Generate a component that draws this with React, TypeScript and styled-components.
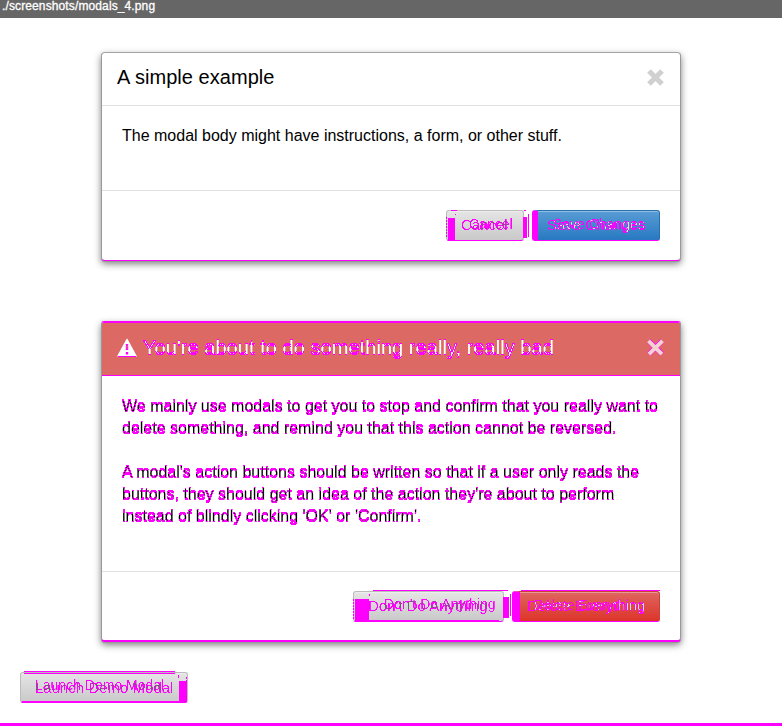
import React from "react";
import styled, { createGlobalStyle, css } from "styled-components";

const MARK = "#ff00ff";

const GlobalStyle = createGlobalStyle`
  * { box-sizing: border-box; }
  html, body { margin: 0; overflow: hidden; background: #fff; }
  body { font-family: "Liberation Sans", Arial, sans-serif; color: #000; }
`;

const Page = styled.div`
  width: 782px;
  height: 726px;
  display: flex;
  flex-direction: column;
  align-items: flex-start;
  border-bottom: 3px solid ${MARK};
`;

const TitleBar = styled.header`
  width: 100%;
  height: 18px;
  flex: none;
  padding-left: 2px;
  background: #666;
  color: #fff;
  font-size: 12px;
  line-height: 13px;
  letter-spacing: 0.12px;
  -webkit-text-stroke: 0.3px #fff;
`;

const Modal = styled.section<{ $danger?: boolean }>`
  width: 580px;
  height: ${(p) => (p.$danger ? 321 : 209)}px;
  flex: none;
  margin: ${(p) => (p.$danger ? "60px 0 0 101px" : "34px 0 0 101px")};
  display: flex;
  flex-direction: column;
  background: #fff;
  border: 1px solid #999;
  border-bottom: ${(p) => (p.$danger ? 2 : 1)}px solid ${MARK};
  border-top-color: ${(p) => (p.$danger ? MARK : "#a4a4a4")};
  border-radius: ${(p) => (p.$danger ? "3px 3px 4px 4px" : "4px")};
  box-shadow: 0 1px 0 #999, 0 3px 7px rgba(0, 0, 0, 0.5);
`;

const ModalHeader = styled.div<{ $danger?: boolean }>`
  height: ${(p) => (p.$danger ? 54 : 53)}px;
  flex: none;
  display: flex;
  align-items: center;
  padding: 0 15px;
  border-bottom: 1px solid ${(p) => (p.$danger ? MARK : "#e1e1e1")};
  ${(p) =>
    p.$danger &&
    css`
      background: #dd6964;
      color: #fff;
      border-top: 1px solid ${MARK};
      border-radius: 2px 2px 0 0;
    `}
`;

const Title = styled.h2<{ $marked?: boolean }>`
  margin: 0 0 ${(p) => (p.$marked ? 2 : 4)}px;
  flex: 1;
  font-size: 20px;
  line-height: 24px;
  font-weight: 400;
  letter-spacing: 0.05px;
  white-space: nowrap;
  ${(p) => p.$marked && "filter: url(#shifted-text);"}
`;

const WarningIcon = styled.svg`
  width: 20px;
  height: 20px;
  flex: none;
  margin-right: 6px;
  margin-top: -3px;
`;

const CloseIcon = styled.svg`
  width: 19px;
  height: 19px;
  flex: none;
  margin-top: -3px;
`;

const Body = styled.div<{ $marked?: boolean }>`
  flex: 1;
  padding: ${(p) => (p.$marked ? 20 : 19)}px 20px 0;
  font-size: 16px;
  line-height: 22px;
  white-space: nowrap;
  ${(p) => p.$marked && "filter: url(#shifted-text);"}
`;

const Paragraph = styled.p`
  margin: 0 0 22px;
`;

const Footer = styled.div<{ $danger?: boolean }>`
  height: ${(p) => (p.$danger ? 69 : 70)}px;
  flex: none;
  display: flex;
  justify-content: flex-end;
  padding: 19px 20px 0 0;
  border-top: 1px solid #e1e1e1;
`;

type Tone = "grey" | "blue" | "red";
const tones = {
  grey: ["#e5e5e5", "#c9c9c9", "#bbb"],
  blue: ["#589cd4", "#2879c2", "#2472b0"],
  red: ["#df6660", "#dd3429", "#c94139"],
};

const ButtonFace = styled.button<{ $tone: Tone; $width: number; $strip: number }>`
  position: relative;
  width: ${(p) => p.$width}px;
  height: 31px;
  flex: none;
  padding: 0;
  border: 1px solid ${(p) => tones[p.$tone][2]};
  border-bottom-color: ${MARK};
  border-radius: 3px;
  background: linear-gradient(${(p) => tones[p.$tone][0]}, ${(p) => tones[p.$tone][1]});
  box-shadow: inset 0 1px 0 rgba(255, 255, 255, 0.35);
  font: 16px "Liberation Sans", Arial, sans-serif;
  ${(p) => p.$tone !== "grey" && `border-left: ${p.$strip}px solid ${MARK};`}
`;

const Patch = styled.i<{ $x: number; $y: number; $w: number; $h: number; $dashed?: boolean }>`
  position: absolute;
  left: ${(p) => p.$x}px;
  top: ${(p) => p.$y}px;
  width: ${(p) => p.$w}px;
  height: ${(p) => p.$h}px;
  background: ${(p) => (p.$dashed ? `repeating-linear-gradient(${MARK} 0 2px, transparent 2px 3px)` : MARK)};
`;

const Overlay = styled.span<{ $light: boolean }>`
  position: absolute;
  inset: -1px;
  filter: url(${(p) => (p.$light ? "#double-text-light" : "#double-text-dark")});
`;

const Copy = styled.span<{ $x: number; $y: number; $size: number; $space?: number }>`
  position: absolute;
  left: ${(p) => p.$x}px;
  top: ${(p) => p.$y}px;
  color: rgba(0, 0, 0, 0.5);
  font-size: ${(p) => p.$size}px;
  line-height: 18px;
  letter-spacing: ${(p) => p.$space || 0}px;
  white-space: nowrap;
`;

const Spacer = styled.span<{ $w: number }>`
  width: ${(p) => p.$w}px;
`;

const LaunchRow = styled.div`
  margin: 30px 0 0 20px;
`;

type Pos = [x: number, y: number, size: number, space?: number];
type Rect = [x: number, y: number, w: number, h: number, dashed?: boolean];

function Button(props: {
  label: string;
  tone: Tone;
  width: number;
  strip?: number;
  copies: Pos[];
  patches?: Rect[];
}) {
  const strip = props.strip ?? 1;
  return (
    <ButtonFace $tone={props.tone} $width={props.width} $strip={strip}>
      {(props.patches || []).map(([x, y, w, h, dashed], i) => (
        <Patch key={i} $x={x - strip} $y={y - 1} $w={w} $h={h} $dashed={dashed} />
      ))}
      <Overlay $light={props.tone !== "grey"}>
        {props.copies.map(([x, y, size, space], i) => (
          <Copy key={i} $x={x - strip + 1} $y={y} $size={size} $space={space} aria-hidden={i > 0}>
            {props.label}
          </Copy>
        ))}
      </Overlay>
    </ButtonFace>
  );
}

function Close({ marked }: { marked?: boolean }) {
  return (
    <CloseIcon viewBox="0 0 19 19" aria-label="Close">
      <path d="M3 3l13 13m0-13L3 16" stroke={marked ? MARK : "#d0d0d0"} strokeWidth="5.2" />
      {marked && <path d="M2.5 2.8l13.4 13.4m0.6-13.4L3 16.2" stroke="#f4d2d0" strokeWidth="4" />}
    </CloseIcon>
  );
}

function DoubleTextFilter({ id, overlap }: { id: string; overlap: string }) {
  return (
    <filter id={id} x="0" y="0" width="100%" height="100%" colorInterpolationFilters="sRGB">
      <feComponentTransfer in="SourceAlpha" result="any">
        <feFuncA type="linear" slope="8" intercept="-1.6" />
      </feComponentTransfer>
      <feFlood floodColor={MARK} />
      <feComposite in2="any" operator="in" result="marks" />
      <feComponentTransfer in="SourceAlpha" result="both">
        <feFuncA type="linear" slope="9" intercept="-4.7" />
      </feComponentTransfer>
      <feFlood floodColor={overlap} />
      <feComposite in2="both" operator="in" result="overlap" />
      <feMerge>
        <feMergeNode in="marks" />
        <feMergeNode in="overlap" />
      </feMerge>
    </filter>
  );
}

function TextFilters() {
  return (
    <svg width="0" height="0" style={{ position: "absolute" }} aria-hidden>
      <filter id="shifted-text" x="0" y="0" width="100%" height="100%" colorInterpolationFilters="sRGB">
        <feOffset in="SourceAlpha" dy="-1" result="up" />
        <feComposite in="SourceAlpha" in2="up" operator="arithmetic" k2="1" k3="-1" result="a" />
        <feComposite in="up" in2="SourceAlpha" operator="arithmetic" k2="1" k3="-1" result="b" />
        <feMerge result="edges">
          <feMergeNode in="a" />
          <feMergeNode in="b" />
        </feMerge>
        <feComponentTransfer in="edges" result="hard">
          <feFuncA type="linear" slope="20" intercept="-4" />
        </feComponentTransfer>
        <feFlood floodColor={MARK} />
        <feComposite in2="hard" operator="in" result="marks" />
        <feMerge>
          <feMergeNode in="SourceGraphic" />
          <feMergeNode in="marks" />
        </feMerge>
      </filter>
      <DoubleTextFilter id="double-text-dark" overlap="#666" />
      <DoubleTextFilter id="double-text-light" overlap="#e4dfe8" />
    </svg>
  );
}

export default function App() {
  return (
    <>
      <GlobalStyle />
      <TextFilters />
      <Page>
        <TitleBar>./screenshots/modals_4.png</TitleBar>

        <Modal>
          <ModalHeader>
            <Title>A simple example</Title>
            <Close />
          </ModalHeader>
          <Body>The modal body might have instructions, a form, or other stuff.</Body>
          <Footer>
            <Button
              label="Cancel"
              tone="grey"
              width={78}
              copies={[[15, 6, 15], [23, 5, 14]]}
              patches={[[2, 8, 7, 23], [0, 7, 1, 20, true], [5, 0, 6, 1], [9, 4, 1, 1], [77, 7, 4, 21], [82, 4, 1, 23], [78, 0, 2, 1]]}
            />
            <Spacer $w={8} />
            <Button label="Save Changes" tone="blue" width={128} strip={6} copies={[[15, 6, 15], [21, 5, 14]]} />
          </Footer>
        </Modal>

        <Modal $danger>
          <ModalHeader $danger>
            <WarningIcon viewBox="0 0 20 20">
              <path d="M10 1.5L19 18H1z" fill="#fff" stroke="#fff" strokeWidth="1.5" strokeLinejoin="round" />
              <path d="M10 6v6M10 14v2.5" stroke={MARK} strokeWidth="2.4" />
              <path d="M10 7v4" stroke="#d77" strokeWidth="1" />
              <path d="M1 18.5h18" stroke={MARK} strokeWidth="1" />
            </WarningIcon>
            <Title $marked>You're about to do something really, really bad</Title>
            <Close marked />
          </ModalHeader>
          <Body $marked>
            <Paragraph>
              We mainly use modals to get you to stop and confirm that you really want to
              <br />
              delete something, and remind you that this action cannot be reversed.
            </Paragraph>
            <Paragraph>
              A modal's action buttons should be written so that if a user only reads the
              <br />
              buttons, they should get an idea of the action they're about to perform
              <br />
              instead of blindly clicking 'OK' or 'Confirm'.
            </Paragraph>
          </Body>
          <Footer $danger>
            <Button
              label="Don't Do Anything"
              tone="grey"
              width={151}
              copies={[[15, 6, 15], [31, 4, 14]]}
              patches={[[2, 8, 14, 23], [0, 8, 1, 20, true], [20, -1, 135, 1], [16, 3, 1, 2], [150, 6, 6, 21], [157, 3, 1, 22], [4, 29, 142, 2]]}
            />
            <Spacer $w={8} />
            <Button
              label="Delete Everything"
              tone="red"
              width={148}
              strip={8}
              copies={[[15, 6, 15], [22, 5, 14]]}
              patches={[[9, -1, 139, 1]]}
            />
          </Footer>
        </Modal>

        <LaunchRow>
          <Button
            label="Launch Demo Modal"
            tone="grey"
            width={168}
            copies={[[15, 7, 15], [15, 4, 14]]}
            patches={[[4, -1, 151, 1], [4, 1, 151, 1], [159, 9, 8, 21], [2, 29, 163, 2], [158, 3, 1, 3], [166, 5, 1, 24, true]]}
          />
        </LaunchRow>
      </Page>
    </>
  );
}
